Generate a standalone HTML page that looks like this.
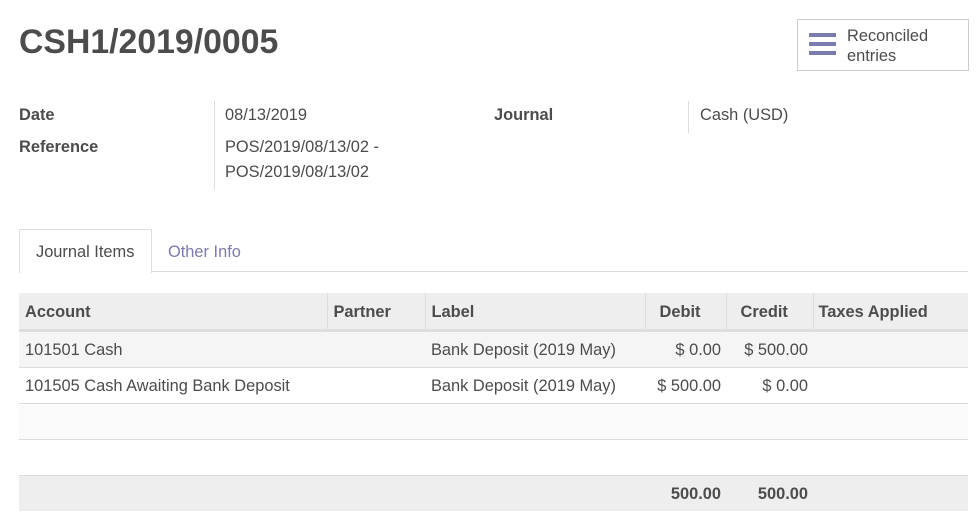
<!DOCTYPE html><html><head><style>
body{margin:0;width:977px;height:522px;background:#fff;font-family:"Liberation Sans",sans-serif;color:#4c4c4c;position:relative;overflow:hidden;font-size:16.4px}
.a{position:absolute;white-space:nowrap}
b{font-weight:bold}
table{position:absolute;left:19px;top:293px;width:949px;border-collapse:collapse;table-layout:fixed}
td,th{padding:0 6px;height:33px;font-size:16.4px;border-bottom:1px solid #ddd;padding-top:2px}
th{background:#eee;text-align:left;height:34px;border-bottom:3px solid #ddd;border-right:1px solid #ddd}
th:last-child{border-right:none;padding-left:5px}
th.r{padding-left:14px}
.r{text-align:right}
td.r{padding-right:5px}
</style></head><body>
<div class="a" style="left:19px;top:23px;font-size:33.8px;font-weight:bold;color:#4c4c4c">CSH1/2019/0005</div>
<div class="a" style="left:797px;top:19px;width:170px;height:50px;border:1px solid #ccc;"></div>
<div class="a" style="left:809px;top:33px;width:27px;height:4px;background:#7c7bad;box-shadow:0 9px 0 #7c7bad,0 18px 0 #7c7bad"></div>
<div class="a" style="left:847px;top:26px;line-height:20px">Reconciled<br>entries</div>
<div class="a" style="left:19px;top:106px"><b>Date</b></div>
<div class="a" style="left:19px;top:138px"><b>Reference</b></div>
<div class="a" style="left:214px;top:101px;width:1px;height:89px;background:#ddd"></div>
<div class="a" style="left:225px;top:106px">08/13/2019</div>
<div class="a" style="left:225px;top:135px;line-height:25px">POS/2019/08/13/02 -<br>POS/2019/08/13/02</div>
<div class="a" style="left:494px;top:106px"><b>Journal</b></div>
<div class="a" style="left:688px;top:101px;width:1px;height:32px;background:#ddd"></div>
<div class="a" style="left:700px;top:106px">Cash (USD)</div>
<div class="a" style="left:19px;top:271px;width:949px;height:1px;background:#ddd"></div>
<div class="a" style="left:19px;top:229px;width:131px;height:43px;border:1px solid #ddd;border-bottom:none;background:#fff"></div>
<div class="a" style="left:36px;top:243px">Journal Items</div>
<div class="a" style="left:168px;top:243px;color:#7c7bad">Other Info</div>
<table>
<colgroup><col style="width:308px"><col style="width:98px"><col style="width:220px"><col style="width:81px"><col style="width:87px"><col></colgroup>
<tr><th>Account</th><th>Partner</th><th>Label</th><th class="r" style="text-align:left">Debit</th><th class="r" style="text-align:left">Credit</th><th>Taxes Applied</th></tr>
<tr style="background:#f5f5f5"><td>101501 Cash</td><td></td><td>Bank Deposit (2019 May)</td><td class="r">$ 0.00</td><td class="r">$ 500.00</td><td></td></tr>
<tr><td>101505 Cash Awaiting Bank Deposit</td><td></td><td>Bank Deposit (2019 May)</td><td class="r">$ 500.00</td><td class="r">$ 0.00</td><td></td></tr>
<tr style="background:#fafafa"><td></td><td></td><td></td><td></td><td></td><td></td></tr>
<tr><td></td><td></td><td></td><td></td><td></td><td></td></tr>
<tr style="background:#eee;font-weight:bold"><td style="border:none;height:32px"></td><td style="border:none"></td><td style="border:none"></td><td class="r" style="border:none">500.00</td><td class="r" style="border:none">500.00</td><td style="border:none"></td></tr>
</table>
</body></html>
